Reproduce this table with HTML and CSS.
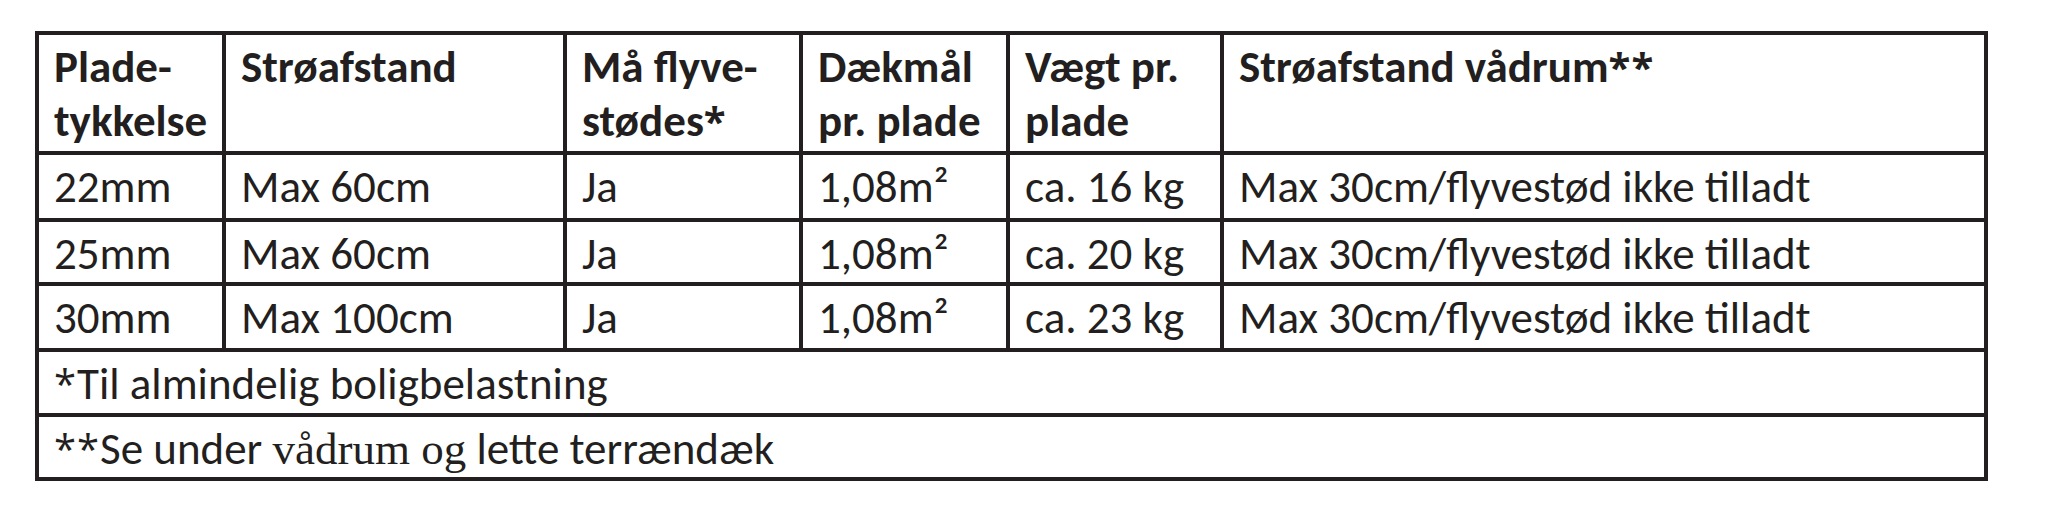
FILE: index.html
```html
<!DOCTYPE html>
<html lang="da">
<head>
<meta charset="utf-8">
<title>Plader</title>
<link rel="stylesheet" href="styles.css">
</head>
<body>
<div class="tbl" role="table">
  <div class="cell head" role="columnheader">Plade-<br>tykkelse</div>
  <div class="cell head" role="columnheader">Strøafstand</div>
  <div class="cell head" role="columnheader">Må flyve-<br>stødes<span class="ast">*</span></div>
  <div class="cell head" role="columnheader">Dækmål<br>pr. plade</div>
  <div class="cell head" role="columnheader">Vægt pr.<br>plade</div>
  <div class="cell head" role="columnheader">Strøafstand vådrum<span class="ast">**</span></div>

  <div class="cell" role="cell">22mm</div>
  <div class="cell" role="cell">Max 60cm</div>
  <div class="cell" role="cell">Ja</div>
  <div class="cell" role="cell">1,08m²</div>
  <div class="cell" role="cell">ca. 16 kg</div>
  <div class="cell" role="cell">Max 30cm/flyvestød ikke tilladt</div>

  <div class="cell" role="cell">25mm</div>
  <div class="cell" role="cell">Max 60cm</div>
  <div class="cell" role="cell">Ja</div>
  <div class="cell" role="cell">1,08m²</div>
  <div class="cell" role="cell">ca. 20 kg</div>
  <div class="cell" role="cell">Max 30cm/flyvestød ikke tilladt</div>

  <div class="cell" role="cell">30mm</div>
  <div class="cell" role="cell">Max 100cm</div>
  <div class="cell" role="cell">Ja</div>
  <div class="cell" role="cell">1,08m²</div>
  <div class="cell" role="cell">ca. 23 kg</div>
  <div class="cell" role="cell">Max 30cm/flyvestød ikke tilladt</div>

  <div class="cell foot" role="cell"><span class="ast">*</span>Til almindelig boligbelastning</div>
  <div class="cell foot" role="cell"><span class="ast">**</span>Se under <span class="serif">vådrum og</span> lette terrændæk</div>
</div>
</body>
</html>
```

FILE: styles.css
```css
html, body {
  margin: 0;
  padding: 0;
  background: #ffffff;
}

body {
  width: 2048px;
  height: 519px;
  overflow: hidden;
}

.tbl {
  display: grid;
  grid-template-columns: 183px 337px 232px 203px 210px 760px;
  grid-template-rows: 116px 63px 60px 62px 61px 60px;
  gap: 4px;
  padding: 4px;
  background: #231f20;
  width: max-content;
  margin: 31px 0 0 35px;
}

.cell {
  background: #ffffff;
  padding: 5px 15px 0;
  font-family: Carlito, Lato, "Open Sans", sans-serif;
  font-size: 45px;
  font-weight: 400;
  line-height: 54px;
  color: #231f20;
  white-space: nowrap;
  overflow: hidden;
}

.head {
  font-weight: 700;
}

.foot {
  grid-column: 1 / -1;
}

.ast {
  font-family: "Open Sans", "DejaVu Sans", sans-serif;
  font-size: 40px;
  letter-spacing: 1px;
}

.serif {
  font-family: "Liberation Serif", "Times New Roman", serif;
}
```
